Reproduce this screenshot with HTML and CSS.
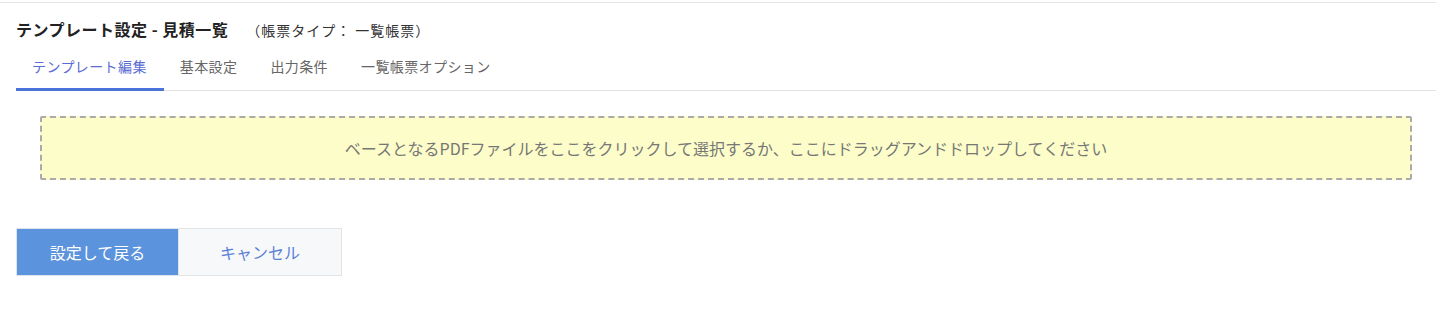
FILE: index.html
```html
<!DOCTYPE html>
<html lang="ja">
<head>
<meta charset="utf-8">
<title>テンプレート設定</title>
<link rel="stylesheet" href="styles.css">
</head>
<body>
<div class="page">
  <div class="header">
    <h1 class="title">テンプレート設定 - 見積一覧</h1>
    <span class="subtitle">（帳票タイプ： 一覧帳票）</span>
  </div>
  <nav class="tabs">
    <a class="tab active">テンプレート編集</a>
    <a class="tab">基本設定</a>
    <a class="tab">出力条件</a>
    <a class="tab">一覧帳票オプション</a>
  </nav>
  <div class="dropzone">ベースとなるPDFファイルをここをクリックして選択するか、ここにドラッグアンドドロップしてください</div>
  <div class="actions">
    <button class="btn btn-primary">設定して戻る</button>
    <button class="btn btn-cancel">キャンセル</button>
  </div>
</div>
</body>
</html>
```
FILE: styles.css
```css
* { box-sizing: border-box; }
html, body { margin: 0; padding: 0; background: #fff; }
body {
  font-family: "Noto Sans CJK JP", "Noto Sans", sans-serif;
  color: #333;
}
.page {
  width: 1436px;
  margin-top: 2px;
  border-top: 1px solid #e6e6e6;
}
.header {
  display: flex;
  align-items: baseline;
  padding: 14px 0 0 16px;
  height: 41px;
}
.title {
  margin: 0;
  font-size: 16px;
  font-weight: 700;
  line-height: 24px;
  letter-spacing: 0.5px;
  color: #222;
}
.subtitle {
  margin-left: 18px;
  font-size: 14px;
  line-height: 24px;
  letter-spacing: 1px;
  color: #333;
}
.tabs {
  display: flex;
  margin-left: 16px;
  border-bottom: 1px solid #e2e2e2;
}
.tab {
  display: block;
  padding: 12px 17px 12px 16px;
  font-size: 14px;
  line-height: 20px;
  letter-spacing: 0.4px;
  color: #666;
  border-bottom: 3px solid transparent;
  margin-bottom: -1px;
  cursor: pointer;
}
.tab.active {
  color: #5a6cd2;
  border-bottom-color: #4a74d9;
}
.dropzone {
  margin: 25px 24px 0 40px;
  height: 64px;
  display: flex;
  align-items: center;
  justify-content: center;
  background: #fcfdc8;
  border: 2px dashed #aaaaaa;
  border-radius: 2px;
  font-size: 16px;
  color: #777;
}
.actions {
  display: flex;
  margin: 48px 0 0 16px;
}
.btn {
  height: 48px;
  font-family: inherit;
  font-size: 16px;
  border: 1px solid #e2e4e8;
  cursor: pointer;
}
.btn-primary {
  width: 162px;
  background: #5b93dc;
  color: #fff;
  border-color: #dfe5ee;
  border-width: 1px 0 1px 1px;
}
.btn-cancel {
  width: 164px;
  background: #f7f8fa;
  color: #5b80d8;
}
```
